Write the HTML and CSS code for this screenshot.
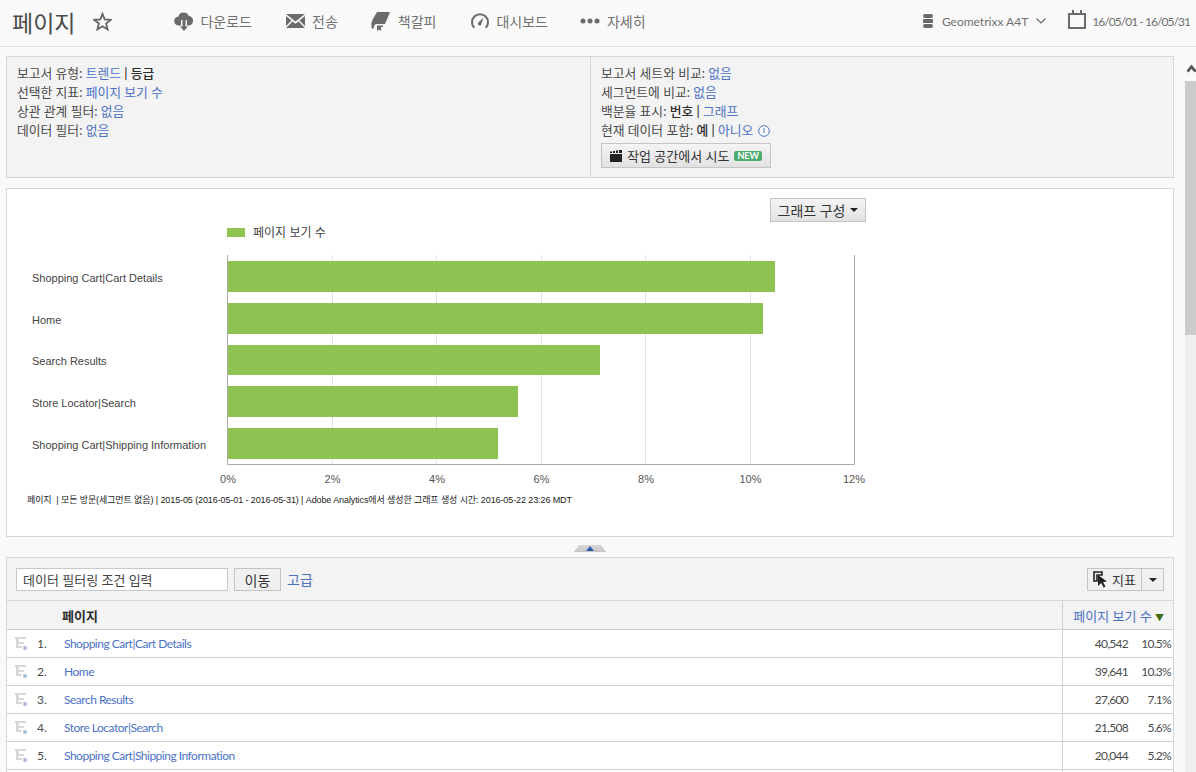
FILE: index.html
```html
<!DOCTYPE html>
<html lang="ko">
<head>
  <meta charset="UTF-8">
  <title>페이지</title>
  <link rel="stylesheet" href="styles.css">
</head>
<body>

  <header class="topbar">
    <h1 class="page-title">페이지</h1>
    <svg class="star" width="19" height="19" viewBox="0 0 19 19"><path d="M9.5 1.800l2.200 5.600 6 .4-4.600 3.800 1.500 5.800-5.100-3.200-5.100 3.200 1.500-5.800L1.300 7.800l6-.4z" fill="none" stroke="#666" stroke-width="1.800"/></svg>

    <nav class="nav">
      <a class="nav-item nav-download">
        <svg width="20" height="20" viewBox="0 0 20 20"><path d="M5 14.500a4.500 4.500 0 0 1-.6-9A5.500 5.500 0 0 1 14.800 5a4.800 4.800 0 0 1 .2 9.500h-2V9H7v5.500z" fill="#6b6b6b"/><path d="M8.500 9h3v6.500H14L10 20l-4-4.500h2.500z" fill="#6b6b6b"/></svg>
        다운로드
      </a>
      <a class="nav-item nav-send">
        <svg width="19" height="14" viewBox="0 0 19 14"><path d="M0 0h19L9.500 7.500z" fill="#6b6b6b"/><path d="M0 2l5.500 4.500L0 12zM19 2l-5.500 4.500L19 12zM0 14l6.500-6.500 3 2.300 3-2.300L19 14z" fill="#6b6b6b"/></svg>
        전송
      </a>
      <a class="nav-item nav-bookmark">
        <svg width="19" height="19" viewBox="0 0 19 19"><path d="M6 0H19L14 12H6C3.500 12 2.800 14 3 16L1 17C0 14 0 10 2 7z" fill="#6b6b6b"/><path d="M6 13.500h6.500l-.8 1.500H10V19L8 17.500 6 19z" fill="#6b6b6b"/></svg>
        책갈피
      </a>
      <a class="nav-item nav-dash">
        <svg width="18" height="18" viewBox="0 0 18 18"><path d="M3.300 15.800a8 8 0 1 1 11.400 0" fill="none" stroke="#6b6b6b" stroke-width="2"/><path d="M7.200 10.800L12.500 5.500l-2.400 7.200a1.700 1.700 0 0 1-2.900-1.900z" fill="#6b6b6b"/></svg>
        대시보드
      </a>
      <a class="nav-item nav-more">
        <svg width="20" height="6" viewBox="0 0 20 6"><circle cx="3" cy="3" r="2.500" fill="#6b6b6b"/><circle cx="10" cy="3" r="2.500" fill="#6b6b6b"/><circle cx="17" cy="3" r="2.500" fill="#6b6b6b"/></svg>
        자세히
      </a>
    </nav>

    <div class="top-right">
      <svg width="10" height="14" viewBox="0 0 10 14"><rect x="0" y="0" width="10" height="4" rx="2" fill="#6b6b6b"/><rect x="0" y="5" width="10" height="4" rx=".5" fill="#6b6b6b"/><rect x="0" y="10" width="10" height="4" rx="2" fill="#6b6b6b"/></svg>
      <span class="suite">Geometrixx A4T</span>
      <svg class="chev" width="10" height="6" viewBox="0 0 10 6"><path d="M.5.500L5 5 9.500.500" fill="none" stroke="#6b6b6b" stroke-width="1.200"/></svg>
      <svg class="cal" width="18" height="19" viewBox="0 0 18 19"><rect x="1" y="4" width="16" height="14" fill="none" stroke="#6b6b6b" stroke-width="2"/><path d="M4 0h2v5H4zM12 0h2v5h-2z" fill="#6b6b6b"/></svg>
      <span class="dates">16/05/01 - 16/05/31</span>
    </div>
  </header>

  <div class="page">
    <main class="content">

      <section class="summary">
        <div class="summary-col summary-left">
          <p>보고서 유형: <a>트렌드</a> <b>|</b> <b>등급</b></p>
          <p>선택한 지표: <a>페이지 보기 수</a></p>
          <p>상관 관계 필터: <a>없음</a></p>
          <p>데이터 필터: <a>없음</a></p>
        </div>
        <div class="summary-col summary-right">
          <p>보고서 세트와 비교: <a>없음</a></p>
          <p>세그먼트에 비교: <a>없음</a></p>
          <p>백분율 표시: <b>번호</b> <b>|</b> <a>그래프</a></p>
          <p>현재 데이터 포함: <b>예</b> <b>|</b> <a>아니오</a>
            <svg class="info" width="12" height="12" viewBox="0 0 12 12"><circle cx="6" cy="6" r="5.300" fill="#fff" stroke="#4a78b8"/><path d="M6 3v4.500L5 8.500" fill="none" stroke="#4a78b8"/></svg>
          </p>
          <button class="btn workspace-btn">
            <svg width="13" height="12" viewBox="0 0 13 12"><path d="M0 4h12v8H0zM0 1.500h2V3H0zM3 1h2v2H3zM6 .5h2V3H6zM9 0h3v3H9z" fill="#222"/></svg>
            작업 공간에서 시도
            <span class="new-tag">NEW</span>
          </button>
        </div>
      </section>

      <section class="chart-card">
        <div class="chart-tools">
          <button class="btn graph-btn">그래프 구성 <i class="caret"></i></button>
        </div>
        <svg class="chart" width="870" height="300" viewBox="7 222 870 300">
          <rect x="227" y="228" width="18" height="9" fill="#8ec351"/>
          <text class="legend" x="253" y="237">페이지 보기 수</text>

          <g stroke="#e2e2e2" stroke-width="1">
            <line x1="332.500" y1="255" x2="332.500" y2="464"/>
            <line x1="436.500" y1="255" x2="436.500" y2="464"/>
            <line x1="541.500" y1="255" x2="541.500" y2="464"/>
            <line x1="645.500" y1="255" x2="645.500" y2="464"/>
            <line x1="750.500" y1="255" x2="750.500" y2="464"/>
          </g>

          <g fill="#8ec351">
            <rect x="228" y="261" width="547" height="31"/>
            <rect x="228" y="303" width="535" height="31"/>
            <rect x="228" y="345" width="372" height="30"/>
            <rect x="228" y="386" width="290" height="31"/>
            <rect x="228" y="428" width="270" height="31"/>
          </g>

          <path d="M227.500 255V464.500H854.500V255" fill="none" stroke="#a8a8a8"/>

          <g class="cat">
            <text x="32" y="282">Shopping Cart|Cart Details</text>
            <text x="32" y="324">Home</text>
            <text x="32" y="365">Search Results</text>
            <text x="32" y="407">Store Locator|Search</text>
            <text x="32" y="449">Shopping Cart|Shipping Information</text>
          </g>

          <g class="tick">
            <text x="228" y="483">0%</text>
            <text x="332.500" y="483">2%</text>
            <text x="437" y="483">4%</text>
            <text x="541.500" y="483">6%</text>
            <text x="646" y="483">8%</text>
            <text x="750.500" y="483">10%</text>
            <text x="854" y="483">12%</text>
          </g>

          <text class="caption" x="27" y="503">페이지 &#160;| 모든 방문(세그먼트 없음) | 2015-05 (2016-05-01 - 2016-05-31) | Adobe Analytics에서 생성한 그래프 생성 시간: 2016-05-22 23:26 MDT</text>
        </svg>
      </section>

      <div class="splitter">
        <span class="split-tab"><i></i></span>
      </div>

      <section class="report">
        <div class="report-tools">
          <input class="filter-input" type="text" value="데이터 필터링 조건 입력">
          <button class="btn go-btn">이동</button>
          <a class="advanced">고급</a>
          <div class="metric-group">
            <button class="btn metric-btn">
              <svg width="15" height="17" viewBox="0 0 15 17"><path d="M1 1h8v3H4v6H1z" fill="none" stroke="#222" stroke-width="1.600"/><path d="M5 4l9 6.500-4 .5 2.500 4.500-1.800 1-2.500-4.500L5 15z" fill="#222"/></svg>
              지표
            </button>
            <button class="btn metric-caret"><i class="caret"></i></button>
          </div>
        </div>

        <table class="report-table">
          <colgroup>
            <col class="c-icon"><col class="c-rank"><col><col class="c-num"><col class="c-pct">
          </colgroup>
          <thead>
            <tr>
              <th colspan="2"></th>
              <th class="th-name">페이지</th>
              <th class="th-metric" colspan="2"><a>페이지 보기 수</a> <span class="sort">▼</span></th>
            </tr>
          </thead>
          <tbody>
            <tr>
              <td class="td-icon"><svg class="tree" width="12" height="13" viewBox="0 0 12 13"><path d="M0 0h11v2H0zM1 2h2.500v9H1zM3.500 5H9v2H3.500zM3.500 9H7v2H3.500z" fill="#d6d6d6"/><circle cx="10" cy="11" r="2" fill="#a9bcd8"/></svg></td>
              <td class="td-rank">1.</td>
              <td class="td-name"><a>Shopping Cart|Cart Details</a></td>
              <td class="td-num">40,542</td>
              <td class="td-pct">10.5%</td>
            </tr>
            <tr>
              <td class="td-icon"><svg class="tree" width="12" height="13" viewBox="0 0 12 13"><path d="M0 0h11v2H0zM1 2h2.500v9H1zM3.500 5H9v2H3.500zM3.500 9H7v2H3.500z" fill="#d6d6d6"/><circle cx="10" cy="11" r="2" fill="#a9bcd8"/></svg></td>
              <td class="td-rank">2.</td>
              <td class="td-name"><a>Home</a></td>
              <td class="td-num">39,641</td>
              <td class="td-pct">10.3%</td>
            </tr>
            <tr>
              <td class="td-icon"><svg class="tree" width="12" height="13" viewBox="0 0 12 13"><path d="M0 0h11v2H0zM1 2h2.500v9H1zM3.500 5H9v2H3.500zM3.500 9H7v2H3.500z" fill="#d6d6d6"/><circle cx="10" cy="11" r="2" fill="#a9bcd8"/></svg></td>
              <td class="td-rank">3.</td>
              <td class="td-name"><a>Search Results</a></td>
              <td class="td-num">27,600</td>
              <td class="td-pct">7.1%</td>
            </tr>
            <tr>
              <td class="td-icon"><svg class="tree" width="12" height="13" viewBox="0 0 12 13"><path d="M0 0h11v2H0zM1 2h2.500v9H1zM3.500 5H9v2H3.500zM3.500 9H7v2H3.500z" fill="#d6d6d6"/><circle cx="10" cy="11" r="2" fill="#a9bcd8"/></svg></td>
              <td class="td-rank">4.</td>
              <td class="td-name"><a>Store Locator|Search</a></td>
              <td class="td-num">21,508</td>
              <td class="td-pct">5.6%</td>
            </tr>
            <tr>
              <td class="td-icon"><svg class="tree" width="12" height="13" viewBox="0 0 12 13"><path d="M0 0h11v2H0zM1 2h2.500v9H1zM3.500 5H9v2H3.500zM3.500 9H7v2H3.500z" fill="#d6d6d6"/><circle cx="10" cy="11" r="2" fill="#a9bcd8"/></svg></td>
              <td class="td-rank">5.</td>
              <td class="td-name"><a>Shopping Cart|Shipping Information</a></td>
              <td class="td-num">20,044</td>
              <td class="td-pct">5.2%</td>
            </tr>
            <tr>
              <td colspan="3"></td>
              <td colspan="2" class="td-num"></td>
            </tr>
          </tbody>
        </table>
      </section>
    </main>

    <div class="scrollbar">
      <div class="scroll-arrow">
        <svg width="10" height="9" viewBox="0 0 10 9"><path d="M.5 8L5 2.500 9.500 8" fill="none" stroke="#555" stroke-width="3"/></svg>
      </div>
      <div class="scroll-thumb"></div>
    </div>
  </div>

</body>
</html>
```

FILE: styles.css
```css
html, body {
  height: 100%;
}

body {
  font-family: "Lato", "Noto Sans CJK KR", sans-serif;
  font-size: 13px;
  background-color: #f9f9f9;
  color: #4b4b4b;
  margin: 0;
  padding: 0;
  overflow: hidden;
  display: flex;
  flex-direction: column;
}

a {
  color: #4c72c4;
}

b {
  color: #2c2c2c;
  font-weight: 500;
}

p {
  margin: 0;
}

/* top bar */
.topbar {
  height: 42px;
  flex: none;
  display: flex;
  align-items: center;
  border-bottom: 1px solid #dcdcdc;
  padding: 0 6px 4px 12px;
}

.page-title {
  font-size: 23px;
  font-weight: 400;
  color: #4b4b4b;
  margin: 1px 0 0;
}

.star {
  margin-left: 18px;
}

.nav {
  display: flex;
  align-items: center;
  margin-left: 62px;
}

.nav-item {
  display: flex;
  align-items: center;
  gap: 7px;
  font-size: 14px;
  color: #707070;
}

.nav-download {
  gap: 6px;
}

.nav-send {
  margin-left: 34px;
}

.nav-bookmark {
  margin-left: 33px;
  gap: 8px;
}

.nav-dash {
  margin-left: 35px;
}

.nav-more {
  margin-left: 32px;
}

.top-right {
  margin-left: auto;
  display: flex;
  align-items: center;
  font-size: 12px;
  color: #707070;
}

.suite {
  margin-left: 9px;
}

.chev {
  margin-left: 8px;
}

.cal {
  margin-left: 22px;
  margin-top: -4px;
}

.dates {
  margin-left: 6px;
  letter-spacing: -.95px;
}

/* page body with scrollbar on the side */
.page {
  flex: 1;
  min-height: 0;
  display: flex;
}

.content {
  flex: 1;
  min-width: 0;
  padding: 9px 11px 0 6px;
}

.scrollbar {
  width: 11px;
  flex: none;
  background-color: #efefef;
}

.scroll-arrow {
  height: 34px;
  background-color: #f9f9f9;
  display: flex;
  align-items: flex-end;
  padding: 0 0 8px 2px;
  box-sizing: border-box;
}

.scroll-thumb {
  height: 254px;
  background-color: #cbcbcb;
}

/* summary box */
.summary {
  display: flex;
  height: 122px;
  box-sizing: border-box;
  background-color: #f3f3f3;
  border: 1px solid #d6d6d6;
  font-size: 12.800px;
  line-height: 19px;
}

.summary-col {
  padding: 7px 10px;
}

.summary-left {
  width: 584px;
  box-sizing: border-box;
  border-right: 1px solid #d6d6d6;
}

.summary-right {
  flex: 1;
}

.info {
  vertical-align: -2px;
  margin-left: 1px;
}

.btn {
  font-family: inherit;
  font-size: 14px;
  color: #333;
  background: linear-gradient(#f4f4f4, #e2e2e2);
  border: 1px solid #c4c4c4;
  padding: 0;
  display: inline-flex;
  align-items: center;
  justify-content: center;
  box-sizing: border-box;
}

.workspace-btn {
  width: 170px;
  height: 25px;
  margin-top: 3px;
  font-size: 13px;
  gap: 4px;
}

.new-tag {
  background-color: #4cae6e;
  color: #fff;
  font-size: 9px;
  font-weight: 700;
  line-height: 10px;
  padding: 0 3px;
  border-radius: 2px;
  margin-left: 1px;
}

.caret {
  display: inline-block;
  width: 0;
  height: 0;
  border-left: 4px solid transparent;
  border-right: 4px solid transparent;
  border-top: 4px solid #222;
}

/* chart card */
.chart-card {
  margin-top: 10px;
  height: 349px;
  box-sizing: border-box;
  background-color: #fff;
  border: 1px solid #d6d6d6;
}

.chart-tools {
  width: 859px;
  padding-top: 9px;
  display: flex;
  justify-content: flex-end;
}

.graph-btn {
  width: 96px;
  height: 24px;
  gap: 5px;
}

.chart {
  display: block;
}

.chart text {
  font-family: "Liberation Sans", "Noto Sans CJK KR", sans-serif;
  font-size: 11px;
  fill: #444;
}

.chart .legend {
  font-size: 12px;
}

.chart .tick text {
  text-anchor: middle;
  fill: #555;
}

.chart .caption {
  font-size: 9px;
  letter-spacing: -.1px;
  fill: #222;
}

/* little tab between the chart and the table */
.splitter {
  height: 20px;
  display: flex;
  justify-content: center;
  align-items: flex-end;
}

.split-tab {
  width: 32px;
  height: 7px;
  margin-bottom: 5px;
  background: linear-gradient(#d8d8d8, #c4c4c4);
  clip-path: polygon(15% 0, 85% 0, 100% 100%, 0 100%);
  display: flex;
  justify-content: center;
}

.split-tab i {
  width: 0;
  height: 0;
  margin-top: 1px;
  border-left: 4px solid transparent;
  border-right: 4px solid transparent;
  border-bottom: 5px solid #2c5ea8;
}

/* report table */
.report {
  background-color: #f3f3f3;
  border: 1px solid #d6d6d6;
  border-bottom: none;
}

.report-tools {
  height: 42px;
  box-sizing: border-box;
  padding: 10px 9px 0;
  display: flex;
  align-items: flex-start;
}

.filter-input {
  width: 212px;
  height: 23px;
  box-sizing: border-box;
  border: 1px solid #c8c8c8;
  padding: 0 6px;
  font-family: inherit;
  font-size: 13px;
  color: #444;
  background-color: #fff;
  outline: none;
}

.go-btn {
  width: 47px;
  height: 23px;
  margin-left: 6px;
  background: #f0f0f0;
}

.advanced {
  margin-left: 6px;
  font-size: 14px;
  line-height: 24px;
}

.metric-group {
  margin-left: auto;
  display: flex;
}

.metric-btn {
  width: 55px;
  height: 23px;
  background: #f0f0f0;
  gap: 4px;
  font-size: 13px;
}

.metric-caret {
  width: 22px;
  height: 23px;
  background: #f0f0f0;
  border-left: none;
}

.report-table {
  width: 100%;
  table-layout: fixed;
  border-collapse: collapse;
}

.c-icon {
  width: 30px;
}

.c-rank {
  width: 25px;
}

.c-num {
  width: 65px;
}

.c-pct {
  width: 45px;
}

.report-table th {
  height: 29px;
  padding: 0;
  box-sizing: border-box;
  border-top: 1px solid #d6d6d6;
  border-bottom: 1px solid #d0d0d0;
  font-weight: 400;
}

.th-name {
  text-align: left;
  font-weight: 700 !important;
  color: #2c2c2c;
}

.th-metric {
  text-align: right;
  padding-right: 9px !important;
  border-left: 1px solid #d0d0d0;
}

.sort {
  color: #3f6a12;
  font-size: 9px;
}

.report-table td {
  height: 28px;
  padding: 0;
  box-sizing: border-box;
  background-color: #fff;
  border-bottom: 1px solid #d0d0d0;
  line-height: 1;
  font-size: 12px;
}

.td-icon {
  padding-left: 8px !important;
}

.tree {
  display: block;
}

.td-name {
  padding-left: 2px !important;
  letter-spacing: -.5px;
}

.td-num {
  text-align: right;
  border-left: 1px solid #d0d0d0;
  letter-spacing: -.7px;
}

.td-pct {
  text-align: right;
  padding-right: 2px !important;
  letter-spacing: -.7px;
}
```
